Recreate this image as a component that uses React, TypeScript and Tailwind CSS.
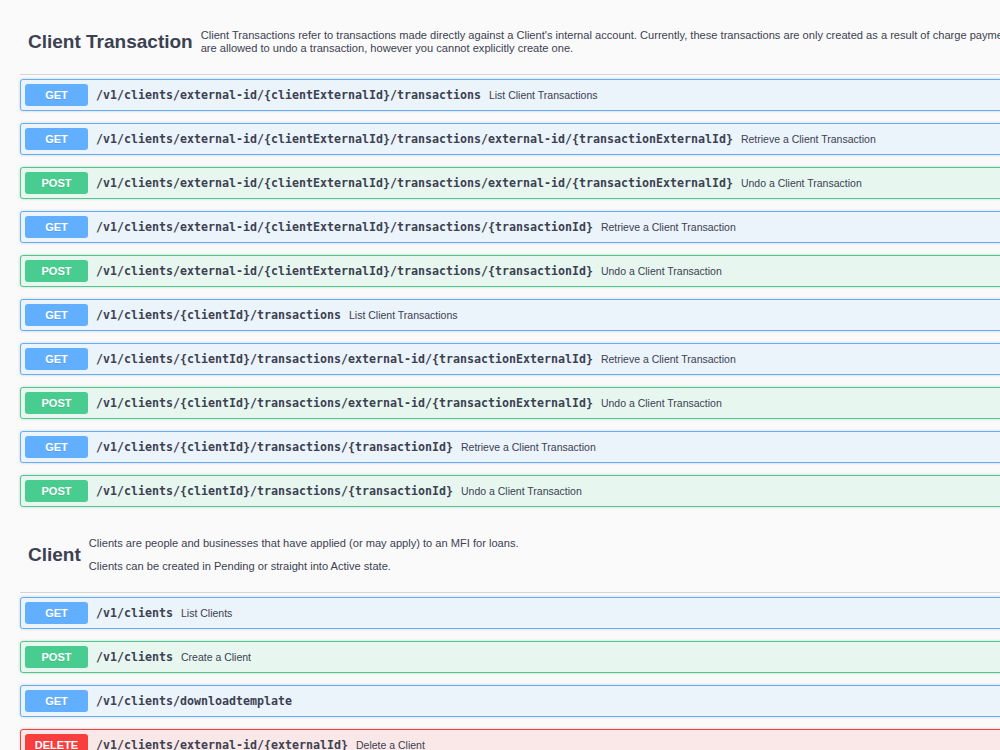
import React from 'react';

type Method = 'GET' | 'POST' | 'DELETE';

type Op = { method: Method; path: string; summary?: string };

const methodStyles: Record<Method, { row: string; badge: string }> = {
  GET: { row: 'bg-[#ebf3fb] border-[#61affe]', badge: 'bg-[#61affe]' },
  POST: { row: 'bg-[#e8f6f0] border-[#49cc90]', badge: 'bg-[#49cc90]' },
  DELETE: { row: 'bg-[#fae7e7] border-[#f93e3e]', badge: 'bg-[#f93e3e]' },
};

const transactionOps: Op[] = [
  { method: 'GET', path: '/v1/clients/external-id/{clientExternalId}/transactions', summary: 'List Client Transactions' },
  { method: 'GET', path: '/v1/clients/external-id/{clientExternalId}/transactions/external-id/{transactionExternalId}', summary: 'Retrieve a Client Transaction' },
  { method: 'POST', path: '/v1/clients/external-id/{clientExternalId}/transactions/external-id/{transactionExternalId}', summary: 'Undo a Client Transaction' },
  { method: 'GET', path: '/v1/clients/external-id/{clientExternalId}/transactions/{transactionId}', summary: 'Retrieve a Client Transaction' },
  { method: 'POST', path: '/v1/clients/external-id/{clientExternalId}/transactions/{transactionId}', summary: 'Undo a Client Transaction' },
  { method: 'GET', path: '/v1/clients/{clientId}/transactions', summary: 'List Client Transactions' },
  { method: 'GET', path: '/v1/clients/{clientId}/transactions/external-id/{transactionExternalId}', summary: 'Retrieve a Client Transaction' },
  { method: 'POST', path: '/v1/clients/{clientId}/transactions/external-id/{transactionExternalId}', summary: 'Undo a Client Transaction' },
  { method: 'GET', path: '/v1/clients/{clientId}/transactions/{transactionId}', summary: 'Retrieve a Client Transaction' },
  { method: 'POST', path: '/v1/clients/{clientId}/transactions/{transactionId}', summary: 'Undo a Client Transaction' },
];

const clientOps: Op[] = [
  { method: 'GET', path: '/v1/clients', summary: 'List Clients' },
  { method: 'POST', path: '/v1/clients', summary: 'Create a Client' },
  { method: 'GET', path: '/v1/clients/downloadtemplate' },
  { method: 'DELETE', path: '/v1/clients/external-id/{externalId}', summary: 'Delete a Client' },
  { method: 'GET', path: '/v1/clients/external-id/{externalId}', summary: 'Retrieve a Client' },
];

function OpRow({ op }: { op: Op }) {
  const s = methodStyles[op.method];
  return (
    <div
      className={`flex items-center h-[32px] mb-[12px] border rounded-[3px] p-1 shadow-[0_0_3px_rgba(0,0,0,0.19)] ${s.row}`}
    >
      <span
        className={`w-[63px] h-[22px] shrink-0 flex items-center justify-center rounded-[3px] text-white font-bold text-[11px] [text-shadow:0_1px_0_rgba(0,0,0,0.1)] ${s.badge}`}
      >
        {op.method}
      </span>
      <span className="ml-2 pt-[2px] font-['DejaVu_Sans_Mono',monospace] font-bold text-[11.63px] text-[#3b4151] whitespace-nowrap">
        {op.path}
      </span>
      {op.summary && (
        <span className="ml-2 pt-[1px] text-[10.5px] text-[#3b4151] whitespace-nowrap">{op.summary}</span>
      )}
    </div>
  );
}

export default function App() {
  return (
    <div className="w-[1000px] h-[750px] overflow-hidden bg-[#fafafa] font-['Liberation_Sans',Arial,sans-serif] text-[#3b4151]">
      <div className="w-[1400px] pt-[20px] pl-[20px]">
        {/* Client Transaction section */}
        <section className="pb-[9px]">
          <div className="flex items-center gap-2 pl-2 pt-[9px] pb-[19px] border-b border-[rgba(59,65,81,0.2)] mb-[4px]">
            <h4 className="text-[19px] font-bold leading-[22px] whitespace-nowrap">Client Transaction</h4>
            <div className="text-[11.1px] leading-[13px] whitespace-nowrap">
              <p>
                Client Transactions refer to transactions made directly against a Client's internal account. Currently, these transactions are only created as a result of charge payments/waivers. You
                <br />
                are allowed to undo a transaction, however you cannot explicitly create one.
              </p>
            </div>
          </div>
          {transactionOps.map((op, i) => (
            <OpRow key={i} op={op} />
          ))}
        </section>

        {/* Client section */}
        <section>
          <div className="flex items-center gap-2 pl-2 pt-[9px] pb-[19px] border-b border-[rgba(59,65,81,0.2)] mb-[4px]">
            <h4 className="text-[19px] font-bold leading-[22px] whitespace-nowrap">Client</h4>
            <div className="text-[11.1px] leading-[13px] whitespace-nowrap">
              <p className="mb-[10px]">Clients are people and businesses that have applied (or may apply) to an MFI for loans.</p>
              <p>Clients can be created in Pending or straight into Active state.</p>
            </div>
          </div>
          {clientOps.map((op, i) => (
            <OpRow key={i} op={op} />
          ))}
        </section>
      </div>
    </div>
  );
}
